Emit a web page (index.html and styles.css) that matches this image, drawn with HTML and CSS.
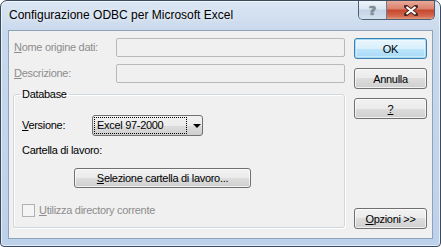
FILE: index.html
```html
<!DOCTYPE html>
<html lang="it">
<head>
    <meta charset="UTF-8">
    <title>Configurazione ODBC per Microsoft Excel</title>
    <link rel="stylesheet" href="styles.css">
</head>
<body>
    <div class="window">
        <div class="titlebar">
            <span class="title">Configurazione ODBC per Microsoft Excel</span>
            <div class="caption-buttons">
                <span class="cap-help">?</span>
                <span class="cap-close">
                    <svg width="14" height="11" viewBox="0 0 14 11">
                        <path d="M2 1.5 L12 9.5 M12 1.5 L2 9.5" stroke="#4a2a24" stroke-width="4" stroke-linecap="square"/>
                        <path d="M2.5 2 L11.5 9 M11.5 2 L2.5 9" stroke="#fff" stroke-width="2.2"/>
                    </svg>
                </span>
            </div>
        </div>

        <div class="client">
            <div class="main">
                <div class="field-row">
                    <span class="label disabled"><u>N</u>ome origine dati:</span>
                    <span class="textbox"></span>
                </div>
                <div class="field-row">
                    <span class="label disabled"><u>D</u>escrizione:</span>
                    <span class="textbox"></span>
                </div>

                <fieldset class="group">
                    <legend>Database</legend>
                    <div class="version-row">
                        <span class="label version-label"><u>V</u>ersione:</span>
                        <div class="combo">
                            <span class="combo-text">Excel 97-2000</span>
                            <span class="combo-arrow"></span>
                        </div>
                    </div>
                    <div class="workbook-label">Cartella di lavoro:</div>
                    <button class="btn btn-select"><u>S</u>elezione cartella di lavoro...</button>
                    <div class="check disabled">
                        <span class="check-box"></span>
                        <span><u>U</u>tilizza directory corrente</span>
                    </div>
                </fieldset>
            </div>

            <div class="side">
                <button class="btn btn-default">OK</button>
                <button class="btn">Annulla</button>
                <button class="btn"><u>?</u></button>
                <button class="btn btn-options"><u>O</u>pzioni &gt;&gt;</button>
            </div>
        </div>
    </div>
</body>
</html>
```

FILE: styles.css
```css
/* Finestra di dialogo stile Windows 7 */
* {
    margin: 0;
    padding: 0;
    box-sizing: border-box;
}
body {
    background: #fff;
    font-family: 'Liberation Sans', Arial, sans-serif;
    font-size: 11px;
    letter-spacing: -0.3px;
    color: #000;
}
.window {
    width: 441px;
    height: 247px;
    border: 1px solid #3b4a5c;
    border-radius: 7px 7px 4px 4px;
    background: linear-gradient(to bottom, #dbe6f3 0, #c9d9ec 30px, #bcd1ea 100%);
    box-shadow: inset 0 0 0 1px rgba(255, 255, 255, 0.6);
    display: flex;
    flex-direction: column;
}

/* Barra del titolo */
.titlebar {
    height: 29px;
    display: flex;
    align-items: flex-start;
    padding-left: 8px;
}
.title {
    margin-top: 6px;
    font-size: 12px;
    letter-spacing: 0;
    line-height: 16px;
    color: #000;
    text-shadow: 0 0 6px rgba(255, 255, 255, 0.9);
}
.caption-buttons {
    margin-left: auto;
    margin-right: 5px;
    height: 19px;
    display: flex;
    border: 1px solid #4d5f74;
    border-top: none;
    border-radius: 0 0 5px 5px;
    overflow: hidden;
}
.cap-help {
    width: 28px;
    display: flex;
    justify-content: center;
    align-items: center;
    background: linear-gradient(to bottom, #eef3f9 0, #dbe5f1 45%, #c3d3e6 50%, #d3e0ee 100%);
    border-right: 1px solid #6a7c90;
    font-family: 'DejaVu Sans', sans-serif;
    font-weight: bold;
    font-size: 13px;
    letter-spacing: 0;
    color: #8592a0;
    text-shadow: 0 0 1px #333;
}
.cap-close {
    width: 47px;
    display: flex;
    justify-content: center;
    align-items: center;
    background: linear-gradient(to bottom, #e9a999 0, #d9806b 45%, #c4452c 50%, #d46b50 85%, #e39a7c 100%);
}

/* Area client */
.client {
    margin: 0 7px;
    height: 209px;
    background: #f0f0f0;
    border: 1px solid #8ea3bb;
    display: flex;
    gap: 9px;
    padding: 7px 5px 8px 4px;
}
.main {
    width: 332px;
    display: flex;
    flex-direction: column;
}
.field-row {
    display: flex;
    justify-content: space-between;
    align-items: center;
    height: 19px;
    padding-left: 1px;
    margin-bottom: 7px;
}
.label {
    line-height: 13px;
}
.disabled {
    color: #8d8d8d;
}
.textbox {
    width: 229px;
    height: 19px;
    border: 1px solid #b9b9b9;
    border-radius: 2px;
    background: #f0f0f0;
}

/* Riquadro Database */
.group {
    flex: 1;
    margin-top: -2px;
    margin-bottom: 2px;
    border: 1px solid #d0d7dd;
    border-radius: 3px;
    box-shadow: inset 1px 1px 0 #fff, 1px 1px 0 #fff;
    padding: 0 0 0 8px;
}
.group legend {
    margin-left: -2px;
    padding: 0 2px;
    line-height: 13px;
}
.version-row {
    display: flex;
    align-items: center;
    margin-top: 14px;
}
.version-label {
    width: 70px;
}
.combo {
    width: 111px;
    height: 21px;
    border: 1px solid #707070;
    border-radius: 3px;
    background: linear-gradient(to bottom, #f2f2f2 0, #ebebeb 50%, #dddddd 50%, #cfcfcf 100%);
    display: flex;
    align-items: center;
    padding: 1px;
}
.combo-text {
    width: 93px;
    height: 17px;
    border: 1px dotted #000;
    line-height: 15px;
    padding-left: 2px;
}
.combo-arrow {
    margin-left: 6px;
    width: 0;
    height: 0;
    border-left: 4px solid transparent;
    border-right: 4px solid transparent;
    border-top: 4px solid #000;
}
.workbook-label {
    margin-top: 8px;
    line-height: 13px;
}

/* Pulsanti */
.btn {
    font-family: inherit;
    font-size: 11px;
    letter-spacing: -0.3px;
    color: #000;
    height: 21px;
    border: 1px solid #707070;
    border-radius: 3px;
    background: linear-gradient(to bottom, #f2f2f2 0, #ebebeb 50%, #dddddd 50%, #cfcfcf 100%);
    box-shadow: inset 0 0 0 1px rgba(255, 255, 255, 0.7);
}
.btn-select {
    width: 177px;
    margin-top: 11px;
    margin-left: 52px;
    height: 20px;
}
.btn-default {
    border-color: #3c7fb1;
    box-shadow: inset 0 0 0 1px #a6ddf5, inset 0 0 0 2px rgba(255, 255, 255, 0.4);
    background: linear-gradient(to bottom, #eaf6fd 0, #d9f0fc 50%, #bee6fd 50%, #a7d9f5 100%);
}
.side {
    width: 73px;
    display: flex;
    flex-direction: column;
    gap: 9px;
}
.btn-options {
    margin-top: auto;
    margin-bottom: 1px;
}

/* Casella di controllo */
.check {
    display: flex;
    align-items: center;
    gap: 4px;
    margin-top: 16px;
    line-height: 13px;
}
.check-box {
    width: 13px;
    height: 13px;
    border: 1px solid #b1b1b1;
    background: #f4f4f4;
}
```
